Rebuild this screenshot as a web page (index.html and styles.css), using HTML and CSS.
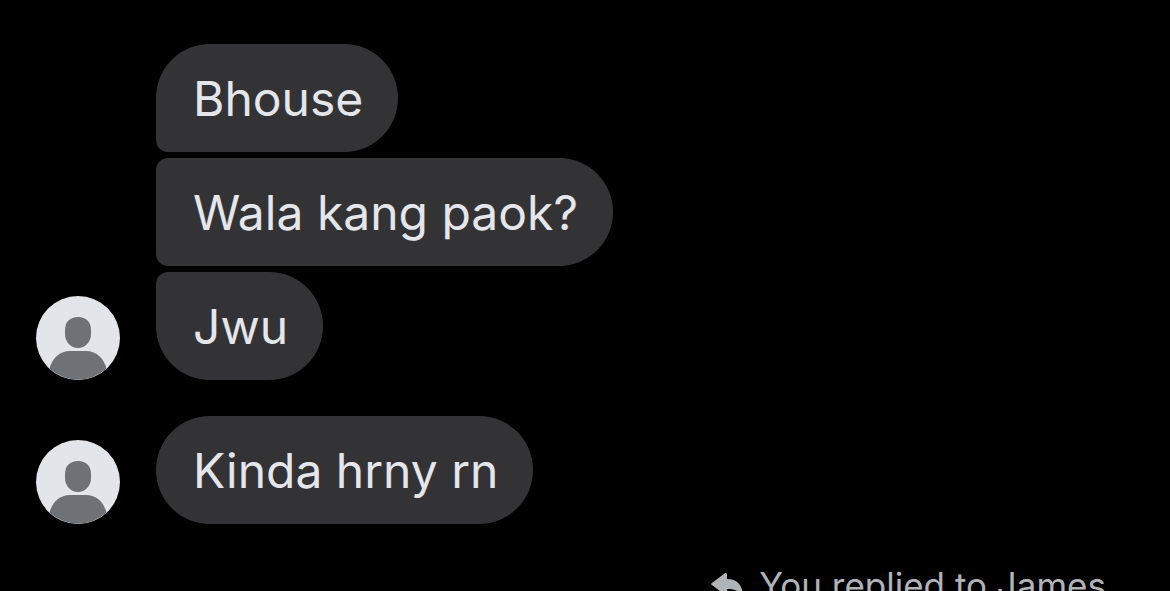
FILE: index.html
```
<!DOCTYPE html>
<html lang="tl">

<head>
    <meta charset="UTF-8">
    <meta name="viewport" content="width=device-width, initial-scale=1.0">
    <title>Chat</title>
    <link rel="stylesheet" href="styles.css">
</head>

<body>
    <main class="chat">
        <section class="group">
            <svg class="avatar" viewBox="0 0 84 84" aria-hidden="true">
                <circle class="avatar-bg" cx="42" cy="42" r="42" />
                <path class="avatar-person" d="M42 21c8 0 13 5 13 13v4c0 8-6 14-13 14s-13-6-13-14v-4c0-8 5-13 13-13z" />
                <path class="avatar-person" d="M13.500 72.600C16 63 23 55 34 55h16c11 0 18 8 20.500 17.600A42 42 0 0 1 13.500 72.600z" />
            </svg>
            <div class="messages">
                <p class="bubble first">Bhouse</p>
                <p class="bubble middle">Wala kang paok?</p>
                <p class="bubble last">Jwu</p>
            </div>
        </section>

        <section class="group">
            <svg class="avatar" viewBox="0 0 84 84" aria-hidden="true">
                <circle class="avatar-bg" cx="42" cy="42" r="42" />
                <path class="avatar-person" d="M42 21c8 0 13 5 13 13v4c0 8-6 14-13 14s-13-6-13-14v-4c0-8 5-13 13-13z" />
                <path class="avatar-person" d="M13.500 72.600C16 63 23 55 34 55h16c11 0 18 8 20.500 17.600A42 42 0 0 1 13.500 72.600z" />
            </svg>
            <div class="messages">
                <p class="bubble">Kinda hrny rn</p>
            </div>
        </section>

        <p class="reply">
            <svg class="reply-icon" viewBox="0 0 32 24" aria-hidden="true">
                <path d="M.600 10.200L13.500.500C14.800-.400 16 .300 16 1.800V6c10 0 16 6 16 17.500-4-6-9-7.500-16-7.500v4.200c0 1.500-1.200 2.200-2.500 1.300L.600 11.800a1 1 0 0 1 0-1.600z" />
            </svg>
            <span>You replied to James</span>
        </p>
    </main>
</body>

</html>
```
FILE: styles.css
```
body {
    margin: 0;
    background: #000;
    font-family: Inter, "Liberation Sans", sans-serif;
    overflow: hidden;
}

p {
    margin: 0;
}

.chat {
    padding: 44px 62px 0 36px;
}

.group {
    display: flex;
    align-items: flex-end;
    gap: 36px;
    margin-bottom: 36px;
}

.avatar {
    flex: none;
    width: 84px;
    height: 84px;
}

.avatar-bg {
    fill: #e2e5e9;
}

.avatar-person {
    fill: #6e7277;
}

.messages {
    display: flex;
    flex-direction: column;
    align-items: flex-start;
    gap: 6px;
}

.bubble {
    padding: 25px 35px 23px 37px;
    border-radius: 54px;
    background: #333335;
    color: #e4e6eb;
    font-size: 48px;
    line-height: 60px;
}

.first {
    border-bottom-left-radius: 12px;
}

.middle {
    border-top-left-radius: 12px;
    border-bottom-left-radius: 12px;
}

.last {
    border-top-left-radius: 12px;
}

.reply {
    display: flex;
    justify-content: flex-end;
    align-items: center;
    gap: 16px;
    padding-right: 2px;
    color: #b0b3b8;
    font-size: 35px;
    line-height: 50px;
}

.reply-icon {
    width: 32px;
    height: 24px;
    fill: #b0b3b8;
}
```
